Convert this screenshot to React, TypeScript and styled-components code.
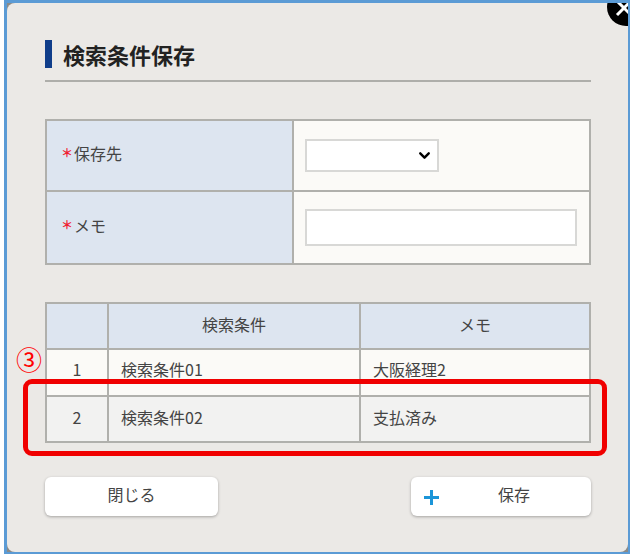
import React from "react";
import styled, { createGlobalStyle } from "styled-components";
import { ChevronDown } from "lucide-react";

const GlobalStyle = createGlobalStyle`
  html, body {
    margin: 0;
    padding: 0;
    background: #ffffff;
  }
  body {
    font-family: "Noto Sans CJK JP", "Liberation Sans", sans-serif;
    color: #333;
  }
`;

const Frame = styled.div`
  width: 626px;
  height: 554px;
  margin-left: 4px;
  box-sizing: border-box;
  background: #5b9bd5;
  padding: 3px 2px 2px 3px;
`;

// the grey shows through at the rounded corners of the dialog
const Backing = styled.div`
  height: 100%;
  background: #8a8a88;
`;

const Dialog = styled.div`
  position: relative;
  height: 100%;
  box-sizing: border-box;
  background: #ebe9e6;
  border-radius: 8px 0 8px 8px;
  padding: 37px 37px 0 38px;
  overflow: hidden;
`;

const CloseButton = styled.div`
  position: absolute;
  top: -15px;
  right: -17px;
  width: 38px;
  height: 38px;
  border-radius: 50%;
  background: #000;
`;

const CloseIcon = styled.svg`
  position: absolute;
  left: 7px;
  top: 10px;
`;

const Title = styled.h2`
  margin: 0;
  height: 42px;
  box-sizing: border-box;
  border-bottom: 2px solid #aeaeaa;
  display: flex;
  align-items: flex-start;
  gap: 11px;
  font-size: 22px;
  font-weight: 700;
  line-height: 28px;
  color: #222;

  &::before {
    content: "";
    width: 7px;
    height: 28px;
    background: #0f3d8a;
  }
`;

const FormGrid = styled.div`
  margin-top: 37px;
  border: 2px solid #b0b0ac;
  display: grid;
  grid-template-columns: 245px 1fr;
  grid-template-rows: 69px 71px;
  background: #b0b0ac;
  gap: 2px;
`;

const LabelCell = styled.div`
  background: #dde5f0;
  display: flex;
  align-items: center;
  gap: 1px;
  padding: 0 0 6px 14px;
  font-size: 16px;
  color: #444;
`;

const Required = styled.span`
  color: #f02030;
  font-size: 12px;
  font-weight: 700;
`;

const FieldCell = styled.div`
  background: #fbfaf7;
  display: flex;
  align-items: center;
  padding-left: 11px;
`;

const SelectBox = styled.div`
  width: 134px;
  height: 33px;
  box-sizing: border-box;
  background: #fff;
  border: 2px solid #d8d8d6;
  display: flex;
  align-items: center;
  justify-content: flex-end;
  padding-right: 4px;
  color: #000;
`;

const TextBox = styled.div`
  width: 272px;
  height: 37px;
  box-sizing: border-box;
  background: #fff;
  border: 2px solid #d8d8d6;
`;

const ConditionTable = styled.table`
  margin-top: 37px;
  width: 100%;
  border-collapse: collapse;
  table-layout: fixed;
  font-size: 16px;
  line-height: 20px;
  color: #444;
`;

const HeadCell = styled.th`
  box-sizing: border-box;
  background: #dde5f0;
  border: 2px solid #b0b0ac;
  height: 46px;
  padding: 0 0 4px;
  font-weight: 400;
  text-align: center;
`;

const Row = styled.tr<{ $highlighted?: boolean }>`
  background: ${(p) => (p.$highlighted ? "#f2f2f1" : "#fbfaf7")};
`;

const Cell = styled.td<{ $center?: boolean; $raised?: boolean }>`
  box-sizing: border-box;
  border: 2px solid #b0b0ac;
  height: ${(p) => (p.$raised ? "47px" : "46px")};
  padding: ${(p) => (p.$raised ? "0 12px 7px" : "0 12px 5px")};
  text-align: ${(p) => (p.$center ? "center" : "left")};
`;

const Footer = styled.div`
  margin-top: 34px;
  display: flex;
  justify-content: space-between;
`;

const Button = styled.button<{ $withIcon?: boolean }>`
  position: relative;
  width: ${(p) => (p.$withIcon ? "180px" : "173px")};
  height: 39px;
  border: 0;
  border-radius: 6px;
  background: #fff;
  box-shadow: 0 1px 3px rgba(0, 0, 0, 0.3);
  font-family: inherit;
  font-size: 16px;
  color: #444;
  padding: ${(p) => (p.$withIcon ? "0 0 5px 26px" : "0 0 5px")};
`;

const PlusIcon = styled.svg`
  position: absolute;
  left: 13px;
  top: 13px;
`;

const Marker = styled.div`
  position: absolute;
  left: 9px;
  top: 340px;
  color: #ff0000;
  font-size: 26px;
  line-height: 32px;
`;

const Highlight = styled.div`
  position: absolute;
  left: 16px;
  top: 376px;
  width: 584px;
  height: 77px;
  box-sizing: border-box;
  border: 5px solid #f00000;
  border-radius: 9px;
`;

export default function App() {
  return (
    <>
      <GlobalStyle />
      <Frame>
        <Backing>
          <Dialog>
            <CloseButton>
              <CloseIcon width="20" height="20" viewBox="0 0 20 20">
                <path d="M3 3l14 14M17 3L3 17" stroke="#fff" strokeWidth="3" />
              </CloseIcon>
            </CloseButton>
            <Title>検索条件保存</Title>
            <FormGrid>
              <LabelCell>
                <Required>＊</Required>保存先
              </LabelCell>
              <FieldCell>
                <SelectBox>
                  <ChevronDown size={17} strokeWidth={3.4} />
                </SelectBox>
              </FieldCell>
              <LabelCell>
                <Required>＊</Required>メモ
              </LabelCell>
              <FieldCell>
                <TextBox />
              </FieldCell>
            </FormGrid>
            <ConditionTable>
              <colgroup>
                <col style={{ width: 62 }} />
                <col style={{ width: 252 }} />
                <col />
              </colgroup>
              <thead>
                <tr>
                  <HeadCell />
                  <HeadCell>検索条件</HeadCell>
                  <HeadCell>メモ</HeadCell>
                </tr>
              </thead>
              <tbody>
                <Row>
                  <Cell $center $raised>1</Cell>
                  <Cell $raised>検索条件01</Cell>
                  <Cell $raised>大阪経理2</Cell>
                </Row>
                <Row $highlighted>
                  <Cell $center>2</Cell>
                  <Cell>検索条件02</Cell>
                  <Cell>支払済み</Cell>
                </Row>
              </tbody>
            </ConditionTable>
            <Footer>
              <Button>閉じる</Button>
              <Button $withIcon>
                <PlusIcon width="15" height="15" viewBox="0 0 15 15">
                  <path d="M7.5 0v15M0 7.5h15" stroke="#1b95d8" strokeWidth="3" />
                </PlusIcon>
                保存
              </Button>
            </Footer>
            <Marker>③</Marker>
            <Highlight />
          </Dialog>
        </Backing>
      </Frame>
    </>
  );
}
